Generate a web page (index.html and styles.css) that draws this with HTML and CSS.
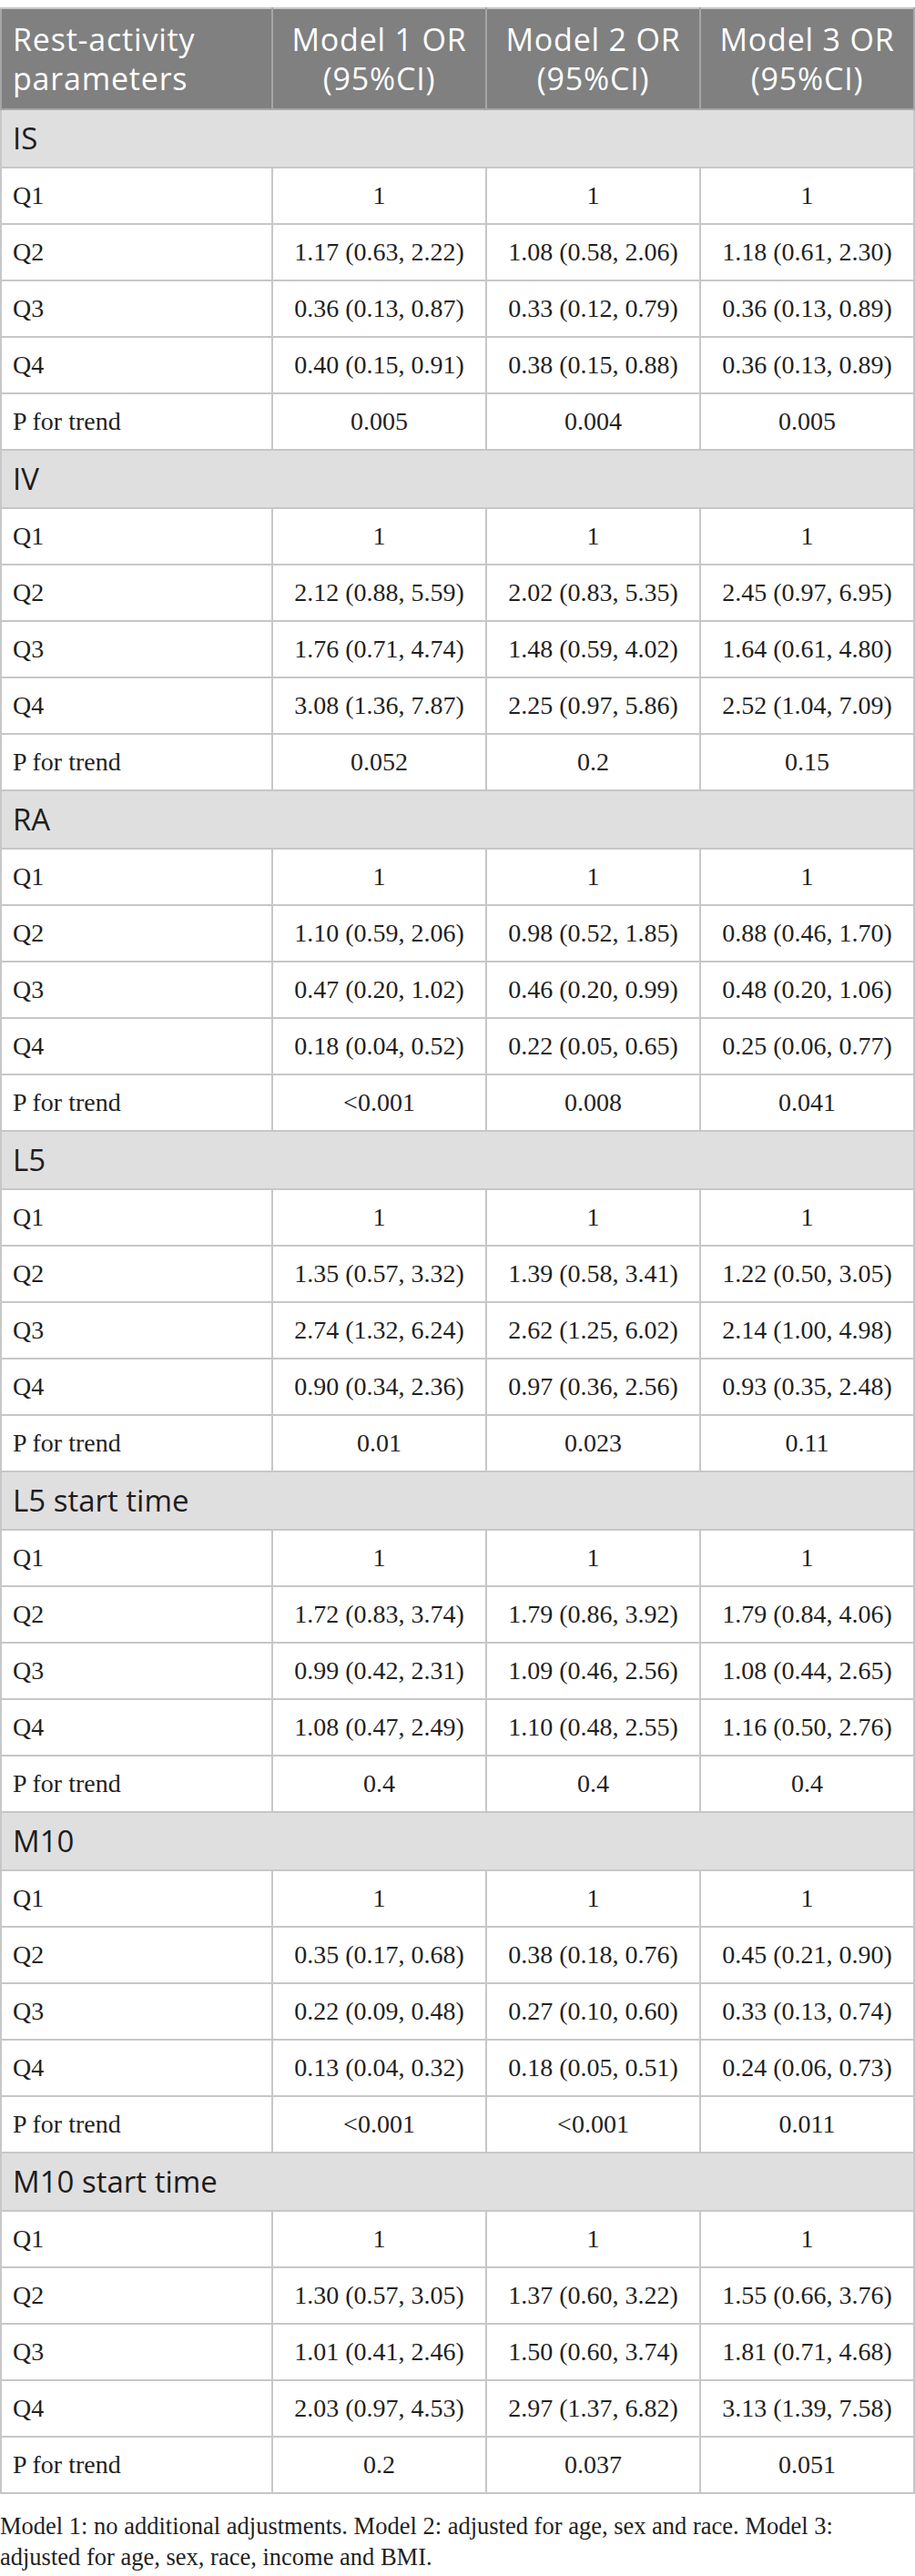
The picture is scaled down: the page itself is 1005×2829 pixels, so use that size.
FILE: index.html
```html
<!DOCTYPE html>
<html lang="en">
<head>
<meta charset="utf-8">
<title>Rest-activity parameters OR table</title>
<link rel="stylesheet" href="styles.css">
</head>
<body>
<table class="or-table">
  <colgroup>
    <col class="c-param">
    <col class="c-model">
    <col class="c-model">
    <col class="c-model">
  </colgroup>
  <thead>
    <tr>
      <th class="param">Rest-activity parameters</th>
      <th>Model 1 OR (95%CI)</th>
      <th>Model 2 OR (95%CI)</th>
      <th>Model 3 OR (95%CI)</th>
    </tr>
  </thead>
  <tbody>
    <tr class="section"><td colspan="4">IS</td></tr>
    <tr class="data"><td class="label">Q1</td><td>1</td><td>1</td><td>1</td></tr>
    <tr class="data"><td class="label">Q2</td><td>1.17 (0.63, 2.22)</td><td>1.08 (0.58, 2.06)</td><td>1.18 (0.61, 2.30)</td></tr>
    <tr class="data"><td class="label">Q3</td><td>0.36 (0.13, 0.87)</td><td>0.33 (0.12, 0.79)</td><td>0.36 (0.13, 0.89)</td></tr>
    <tr class="data"><td class="label">Q4</td><td>0.40 (0.15, 0.91)</td><td>0.38 (0.15, 0.88)</td><td>0.36 (0.13, 0.89)</td></tr>
    <tr class="data"><td class="label">P for trend</td><td>0.005</td><td>0.004</td><td>0.005</td></tr>

    <tr class="section"><td colspan="4">IV</td></tr>
    <tr class="data"><td class="label">Q1</td><td>1</td><td>1</td><td>1</td></tr>
    <tr class="data"><td class="label">Q2</td><td>2.12 (0.88, 5.59)</td><td>2.02 (0.83, 5.35)</td><td>2.45 (0.97, 6.95)</td></tr>
    <tr class="data"><td class="label">Q3</td><td>1.76 (0.71, 4.74)</td><td>1.48 (0.59, 4.02)</td><td>1.64 (0.61, 4.80)</td></tr>
    <tr class="data"><td class="label">Q4</td><td>3.08 (1.36, 7.87)</td><td>2.25 (0.97, 5.86)</td><td>2.52 (1.04, 7.09)</td></tr>
    <tr class="data"><td class="label">P for trend</td><td>0.052</td><td>0.2</td><td>0.15</td></tr>

    <tr class="section"><td colspan="4">RA</td></tr>
    <tr class="data"><td class="label">Q1</td><td>1</td><td>1</td><td>1</td></tr>
    <tr class="data"><td class="label">Q2</td><td>1.10 (0.59, 2.06)</td><td>0.98 (0.52, 1.85)</td><td>0.88 (0.46, 1.70)</td></tr>
    <tr class="data"><td class="label">Q3</td><td>0.47 (0.20, 1.02)</td><td>0.46 (0.20, 0.99)</td><td>0.48 (0.20, 1.06)</td></tr>
    <tr class="data"><td class="label">Q4</td><td>0.18 (0.04, 0.52)</td><td>0.22 (0.05, 0.65)</td><td>0.25 (0.06, 0.77)</td></tr>
    <tr class="data"><td class="label">P for trend</td><td>&lt;0.001</td><td>0.008</td><td>0.041</td></tr>

    <tr class="section"><td colspan="4">L5</td></tr>
    <tr class="data"><td class="label">Q1</td><td>1</td><td>1</td><td>1</td></tr>
    <tr class="data"><td class="label">Q2</td><td>1.35 (0.57, 3.32)</td><td>1.39 (0.58, 3.41)</td><td>1.22 (0.50, 3.05)</td></tr>
    <tr class="data"><td class="label">Q3</td><td>2.74 (1.32, 6.24)</td><td>2.62 (1.25, 6.02)</td><td>2.14 (1.00, 4.98)</td></tr>
    <tr class="data"><td class="label">Q4</td><td>0.90 (0.34, 2.36)</td><td>0.97 (0.36, 2.56)</td><td>0.93 (0.35, 2.48)</td></tr>
    <tr class="data"><td class="label">P for trend</td><td>0.01</td><td>0.023</td><td>0.11</td></tr>

    <tr class="section"><td colspan="4">L5 start time</td></tr>
    <tr class="data"><td class="label">Q1</td><td>1</td><td>1</td><td>1</td></tr>
    <tr class="data"><td class="label">Q2</td><td>1.72 (0.83, 3.74)</td><td>1.79 (0.86, 3.92)</td><td>1.79 (0.84, 4.06)</td></tr>
    <tr class="data"><td class="label">Q3</td><td>0.99 (0.42, 2.31)</td><td>1.09 (0.46, 2.56)</td><td>1.08 (0.44, 2.65)</td></tr>
    <tr class="data"><td class="label">Q4</td><td>1.08 (0.47, 2.49)</td><td>1.10 (0.48, 2.55)</td><td>1.16 (0.50, 2.76)</td></tr>
    <tr class="data"><td class="label">P for trend</td><td>0.4</td><td>0.4</td><td>0.4</td></tr>

    <tr class="section"><td colspan="4">M10</td></tr>
    <tr class="data"><td class="label">Q1</td><td>1</td><td>1</td><td>1</td></tr>
    <tr class="data"><td class="label">Q2</td><td>0.35 (0.17, 0.68)</td><td>0.38 (0.18, 0.76)</td><td>0.45 (0.21, 0.90)</td></tr>
    <tr class="data"><td class="label">Q3</td><td>0.22 (0.09, 0.48)</td><td>0.27 (0.10, 0.60)</td><td>0.33 (0.13, 0.74)</td></tr>
    <tr class="data"><td class="label">Q4</td><td>0.13 (0.04, 0.32)</td><td>0.18 (0.05, 0.51)</td><td>0.24 (0.06, 0.73)</td></tr>
    <tr class="data"><td class="label">P for trend</td><td>&lt;0.001</td><td>&lt;0.001</td><td>0.011</td></tr>

    <tr class="section"><td colspan="4">M10 start time</td></tr>
    <tr class="data"><td class="label">Q1</td><td>1</td><td>1</td><td>1</td></tr>
    <tr class="data"><td class="label">Q2</td><td>1.30 (0.57, 3.05)</td><td>1.37 (0.60, 3.22)</td><td>1.55 (0.66, 3.76)</td></tr>
    <tr class="data"><td class="label">Q3</td><td>1.01 (0.41, 2.46)</td><td>1.50 (0.60, 3.74)</td><td>1.81 (0.71, 4.68)</td></tr>
    <tr class="data"><td class="label">Q4</td><td>2.03 (0.97, 4.53)</td><td>2.97 (1.37, 6.82)</td><td>3.13 (1.39, 7.58)</td></tr>
    <tr class="data"><td class="label">P for trend</td><td>0.2</td><td>0.037</td><td>0.051</td></tr>
  </tbody>
</table>
<p class="footnote">Model 1: no additional adjustments. Model 2: adjusted for age, sex and race. Model 3: adjusted for age, sex, race, income and BMI.</p>
</body>
</html>
```

FILE: styles.css
```css
html, body {
  margin: 0;
  padding: 0;
  background: #ffffff;
}

body {
  padding-top: 8px;
}

.or-table {
  border-collapse: collapse;
  table-layout: fixed;
  width: 1004px;
}

.c-param { width: 298px; }
.c-model { width: 235px; }

.or-table th,
.or-table td {
  border: 2px solid #c7c7c7;
  vertical-align: middle;
}

.or-table thead th {
  background: #808080;
  color: #ffffff;
  font-family: "Open Sans", "DejaVu Sans", sans-serif;
  font-weight: 400;
  font-size: 34px;
  line-height: 43px;
  letter-spacing: 0.8px;
  text-align: center;
  height: 109px;
  padding: 0 12px;
  border-color: #a6a6a6;
  border-top-color: #c7c7c7;
}

.or-table thead th.param {
  text-align: left;
}

.section td {
  background: #e0dfe0;
  color: #1d1d1d;
  font-family: "Open Sans", "DejaVu Sans", sans-serif;
  font-size: 33px;
  line-height: 40px;
  height: 62px;
  padding: 0 12px;
}

.data td {
  color: #1f1f1f;
  font-family: "Liberation Serif", "Times New Roman", serif;
  font-size: 28px;
  line-height: 32px;
  text-align: center;
  height: 60px;
  padding: 0 12px;
}

.data td.label {
  text-align: left;
}

.footnote {
  margin: 18px 0 0 0;
  max-width: 960px;
  color: #1f1f1f;
  font-family: "Liberation Serif", "Times New Roman", serif;
  font-size: 26.5px;
  line-height: 34px;
}
```
